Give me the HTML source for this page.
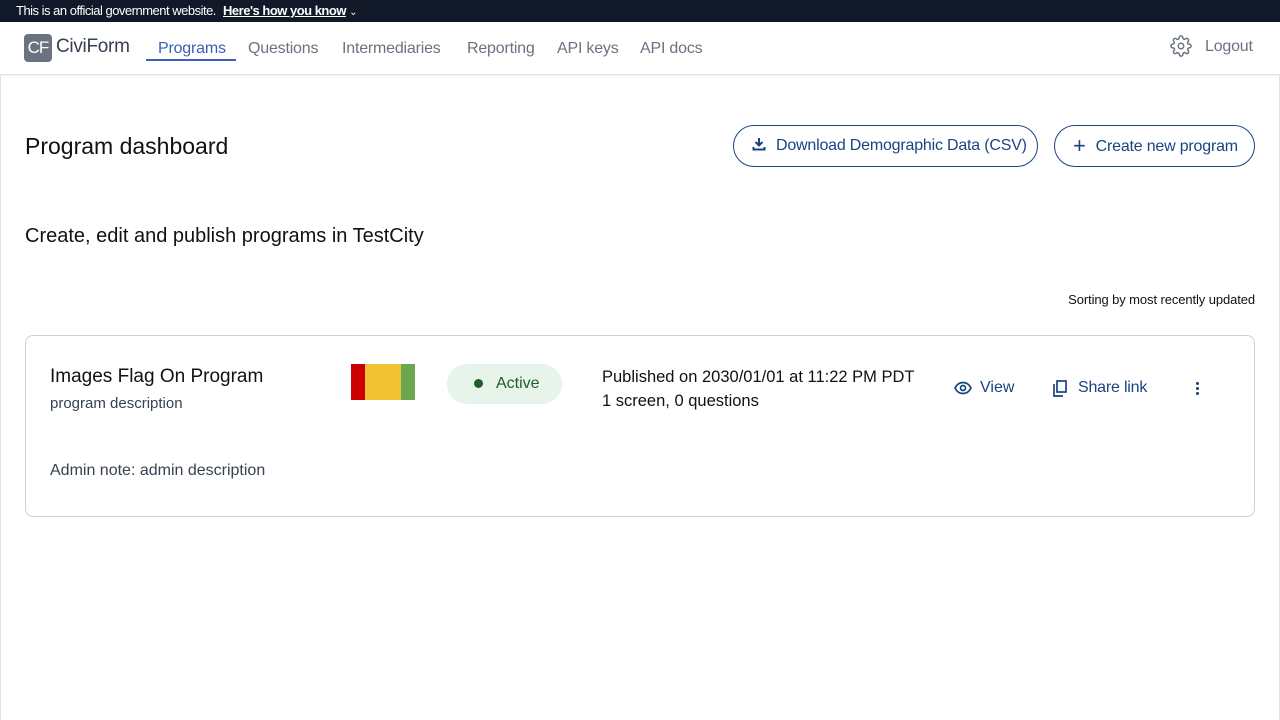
<!DOCTYPE html>
<html><head><meta charset="utf-8"><style>
*{box-sizing:border-box;margin:0;padding:0}
body{width:1280px;height:720px;overflow:hidden;font-family:"Liberation Sans",sans-serif;background:#fff;color:#1b1b1b;position:relative}
.gov{height:22px;background:#111827;color:#fff;font-size:13px;line-height:22px;padding-left:16px;letter-spacing:-0.5px}
.gov b{text-decoration:underline;margin-left:4px}
.nav{height:53px;border-bottom:1px solid #e0e0e0;position:relative;box-shadow:0 1px 2px rgba(0,0,0,.05)}
.logo{position:absolute;left:24px;top:12px;width:28px;height:28px;background:#6b7280;border-radius:4px;color:#fff;font-size:17px;line-height:28px;text-align:center;letter-spacing:-1px}
.brand{position:absolute;left:56px;top:14px;font-size:19px;color:#374151;letter-spacing:-0.3px}
.tab{position:absolute;top:18px;font-size:16px;color:#6b7280;letter-spacing:-0.2px}
.act{color:#3b5fb8}
.uline{position:absolute;left:146px;top:37px;width:90px;height:2px;background:#3b5fb8}
.frame{position:absolute;left:0;top:75px;width:1280px;height:645px;border-left:1px solid #e0e0e0;border-right:1px solid #e0e0e0}
h1{position:absolute;left:25px;top:133px;font-size:23px;font-weight:normal;color:#111}
.btn{position:absolute;top:125px;height:42px;border:1px solid #1a4480;border-radius:21px;color:#1a4480;font-size:16px;line-height:40px;padding-left:18px;letter-spacing:-0.2px}
.sub{position:absolute;left:25px;top:225px;font-size:20px;color:#111}
.sort{position:absolute;right:25px;top:292px;font-size:13px;color:#111;letter-spacing:-0.1px}
.card{position:absolute;left:25px;top:335px;width:1230px;height:182px;border:1px solid #d0d0d0;border-radius:8px}
.abs{position:absolute}
</style></head><body>
<div class="gov">This is an official government website. <b>Here's how you know</b> <span style="font-size:10px">&#8964;</span></div>
<div class="nav">
<div class="logo">CF</div><div class="brand">CiviForm</div>
<div class="tab act" style="left:158px">Programs</div><div class="uline"></div>
<div class="tab" style="left:248px">Questions</div>
<div class="tab" style="left:342px">Intermediaries</div>
<div class="tab" style="left:467px">Reporting</div>
<div class="tab" style="left:557px">API keys</div>
<div class="tab" style="left:640px">API docs</div>
<svg class="abs" style="left:1170px;top:13px" width="22" height="22" viewBox="0 0 24 24" fill="none" stroke="#6b7280" stroke-width="1.6"><circle cx="12" cy="12" r="3"/><path d="M19.4 15a1.65 1.65 0 0 0 .33 1.820l.06.06a2 2 0 1 1-2.830 2.830l-.06-.06a1.65 1.65 0 0 0-2.820 1.170V21a2 2 0 1 1-4 0v-.09A1.65 1.65 0 0 0 9 19.4a1.65 1.65 0 0 0-1.820.33l-.06.06a2 2 0 1 1-2.830-2.830l.06-.06A1.65 1.65 0 0 0 3.180 14H3a2 2 0 1 1 0-4h.09A1.65 1.65 0 0 0 4.600 9a1.65 1.65 0 0 0-.33-1.820l-.06-.06a2 2 0 1 1 2.830-2.830l.06.06A1.65 1.65 0 0 0 9 4.600 1.65 1.65 0 0 0 10 3.090V3a2 2 0 1 1 4 0v.09A1.65 1.65 0 0 0 15 4.600a1.65 1.65 0 0 0 1.820-.33l.06-.06a2 2 0 1 1 2.830 2.830l-.06.06A1.65 1.65 0 0 0 19.4 9c.2.6.8 1 1.510 1H21a2 2 0 1 1 0 4h-.09a1.65 1.65 0 0 0-1.510 1z"/></svg>
<div class="tab" style="left:1205px;top:16px">Logout</div>
</div>
<div class="frame"></div>
<h1>Program dashboard</h1>
<div class="btn" style="left:733px;width:305px"><svg width="14" height="14" viewBox="0 0 14 14" style="vertical-align:-1px;margin-right:10px"><path d="M7 1v7M3.5 5L7 8.5 10.5 5M1.5 10v2.5h11V10" stroke="#1a4480" stroke-width="2" fill="none"/></svg>Download Demographic Data (CSV)</div>
<div class="btn" style="left:1054px;width:201px"><span style="font-size:22px;vertical-align:-2px;margin-right:10px">+</span>Create new program</div>
<div class="sub">Create, edit and publish programs in TestCity</div>
<div class="sort">Sorting by most recently updated</div>
<div class="card">
<div class="abs" style="left:24px;top:30px;font-size:19px;color:#111">Images Flag On Program</div>
<div class="abs" style="left:24px;top:59px;font-size:15px;color:#374151">program description</div>
<div class="abs" style="left:325px;top:28px;width:14px;height:36px;background:#cc0000"></div>
<div class="abs" style="left:339px;top:28px;width:36px;height:36px;background:#f2c235"></div>
<div class="abs" style="left:375px;top:28px;width:14px;height:36px;background:#6aa84f"></div>
<div class="abs" style="left:421px;top:28px;width:115px;height:40px;border-radius:20px;background:#e6f4ea;color:#1e5e2a;font-size:16px;line-height:40px"><span style="display:inline-block;width:9px;height:9px;border-radius:50%;background:#1e5e2a;margin:0 13px 0 27px"></span>Active</div>
<div class="abs" style="left:576px;top:29px;font-size:16.5px;color:#111;line-height:24px">Published on 2030/01/01 at 11:22 PM PDT<br>1 screen, 0 questions</div>
<svg class="abs" style="left:928px;top:45px" width="18" height="14" viewBox="0 0 18 14"><path d="M1 7C3 3 6 1.5 9 1.5S15 3 17 7C15 11 12 12.5 9 12.5S3 11 1 7z" fill="none" stroke="#1a4480" stroke-width="1.7"/><circle cx="9" cy="7" r="2.5" fill="none" stroke="#1a4480" stroke-width="1.7"/></svg>
<div class="abs" style="left:954px;top:43px;font-size:16px;color:#1a4480">View</div>
<svg class="abs" style="left:1027px;top:44px" width="14" height="17" viewBox="0 0 14 17"><rect x="4" y="1" width="9" height="11" fill="none" stroke="#1a4480" stroke-width="1.7"/><path d="M1 4v12h9" fill="none" stroke="#1a4480" stroke-width="1.7"/></svg>
<div class="abs" style="left:1052px;top:43px;font-size:16px;color:#1a4480;letter-spacing:-0.2px">Share link</div>
<div class="abs" style="left:1170px;top:45px;width:3px;height:14px;background:radial-gradient(circle,#1a4480 1.4px,transparent 1.6px) 0 0/3px 5px"></div>
<div class="abs" style="left:24px;top:126px;font-size:16px;color:#374151">Admin note: admin description</div>
</div>
</body></html>
